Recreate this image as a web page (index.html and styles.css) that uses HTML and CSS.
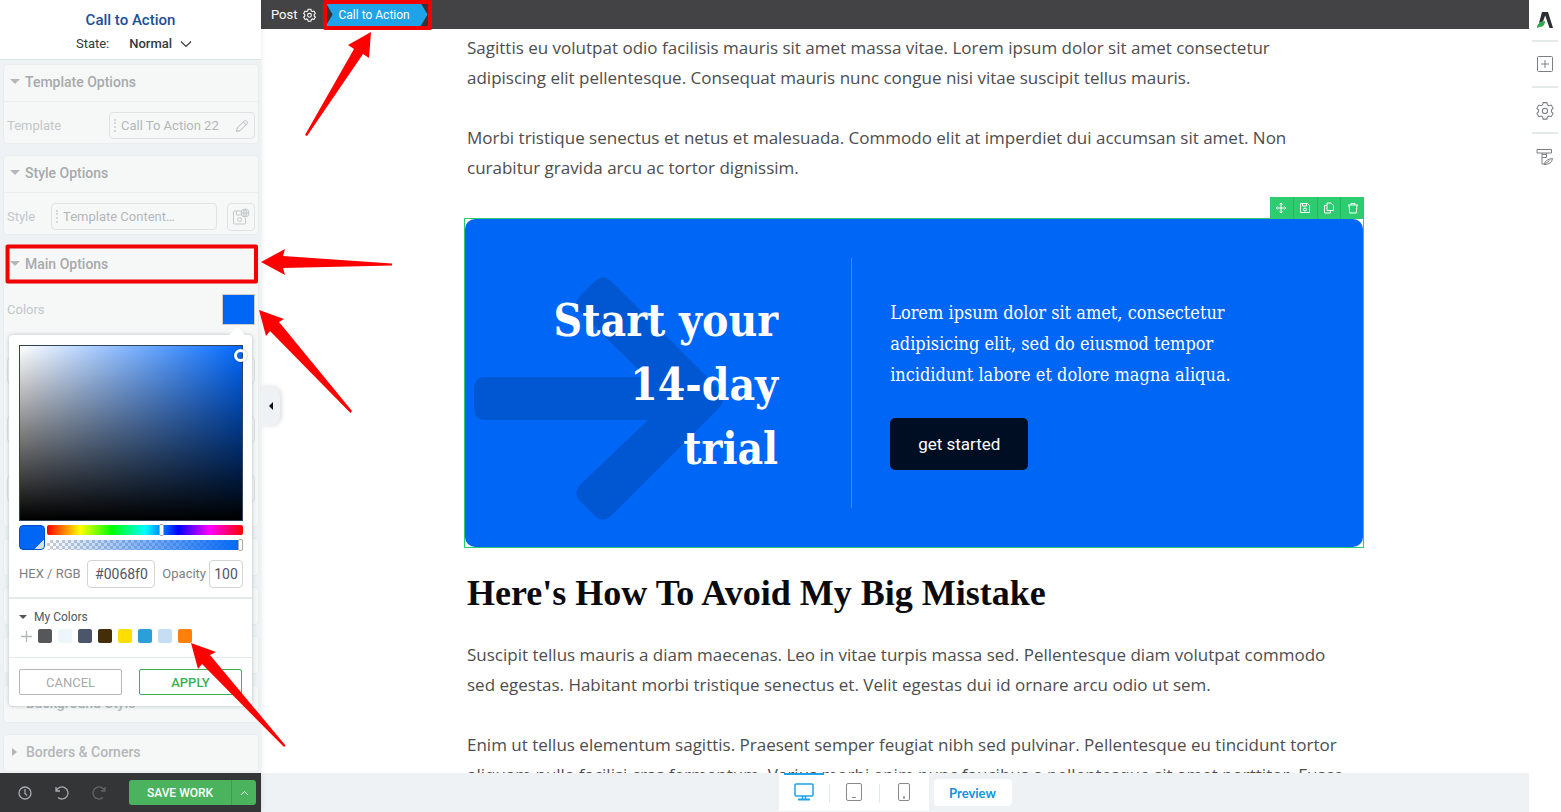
FILE: index.html
```html
<!DOCTYPE html>
<html lang="en">
<head>
    <meta charset="UTF-8">
    <meta name="viewport" content="width=device-width, initial-scale=1.0">
    <title>Call to Action</title>
    <link rel="stylesheet" href="styles.css">
</head>
<body>
<div class="editor">
    <aside class="sidebar">
        <header class="sidebar-header">
            <h1>Call to Action</h1>
            <div class="state">
                <span>State:</span>
                <button type="button" class="state-button">Normal
                    <svg width="12" height="8" viewBox="0 0 12 8"><path d="M1 1.5l5 5 5-5" fill="none" stroke="currentColor" stroke-width="1.2"/></svg>
                </button>
            </div>
        </header>

        <div class="panels">
            <section class="panel">
                <h2 class="panel-title open">Template Options</h2>
                <div class="panel-row">
                    <span class="row-label">Template</span>
                    <button type="button" class="picker picker-template">Call To Action 22
                        <svg width="14" height="14" viewBox="0 0 14 14"><path d="M1.5 12.5l.8-3.5 7.2-7.2q.8-.8 1.6 0l1.1 1.1q.8.8 0 1.6L5 11.7zM8.3 3l2.7 2.7" fill="none" stroke="currentColor"/></svg>
                    </button>
                </div>
            </section>

            <section class="panel">
                <h2 class="panel-title open">Style Options</h2>
                <div class="panel-row">
                    <span class="row-label">Style</span>
                    <button type="button" class="picker picker-style">Template Content…</button>
                    <button type="button" class="save-style" aria-label="Save style">
                        <svg width="18" height="18" viewBox="0 0 18 18" fill="none" stroke="currentColor"><path d="M9 3H2.5Q1.5 3 1.5 4v11q0 1 1 1h10q1 0 1-1v-5M4.500 3v4H9"/><circle cx="7.5" cy="11.5" r="2"/><circle cx="13" cy="5" r="4"/><path d="M9 5h8M13 1v8M13 1q-4 4 0 8M13 1q4 4 0 8"/></svg>
                    </button>
                </div>
            </section>

            <section class="panel panel-main">
                <h2 class="panel-title open">Main Options</h2>
                <div class="panel-row row-colors">
                    <span class="row-label">Colors</span>
                    <button type="button" class="color-button" aria-label="Pick color"></button>
                </div>
                <div class="control-stack">
                    <span></span><span></span><span></span>
                </div>

                <div class="color-picker">
                    <div class="saturation"><span class="saturation-knob"></span></div>
                    <div class="slider-row">
                        <span class="current-color"></span>
                        <div class="sliders">
                            <input type="range" class="hue" min="0" max="360" value="211" aria-label="Hue">
                            <input type="range" class="alpha" min="0" max="100" value="100" aria-label="Alpha">
                        </div>
                    </div>
                    <div class="value-row">
                        <label for="hex">HEX / RGB</label>
                        <input type="text" id="hex" class="hex" value="#0068f0">
                        <label for="opacity">Opacity</label>
                        <input type="text" id="opacity" class="opacity" value="100">
                    </div>
                    <div class="my-colors">
                        <h3>My Colors</h3>
                        <div class="swatches">
                            <button type="button" class="add" aria-label="Add color"><svg width="11" height="11" viewBox="0 0 11 11"><path d="M5.5 0v11M0 5.5h11" stroke="#b4b7b9" stroke-width="1.3"/></svg></button>
                            <button type="button" class="swatch gray" aria-label="Gray"></button>
                            <button type="button" class="swatch mist" aria-label="Mist"></button>
                            <button type="button" class="swatch slate" aria-label="Slate"></button>
                            <button type="button" class="swatch brown" aria-label="Brown"></button>
                            <button type="button" class="swatch yellow" aria-label="Yellow"></button>
                            <button type="button" class="swatch sky" aria-label="Sky"></button>
                            <button type="button" class="swatch pale" aria-label="Pale blue"></button>
                            <button type="button" class="swatch orange" aria-label="Orange"></button>
                        </div>
                    </div>
                    <div class="picker-actions">
                        <button type="button" class="cancel">CANCEL</button>
                        <button type="button" class="apply">APPLY</button>
                    </div>
                </div>
            </section>

            <section class="panel"><div class="panel-title"></div></section>
            <section class="panel"><div class="panel-title"></div></section>
            <section class="panel"><div class="panel-title"></div></section>
            <section class="panel"><h2 class="panel-title">Background Style</h2></section>
            <section class="panel"><h2 class="panel-title">Borders &amp; Corners</h2></section>
        </div>

        <footer class="sidebar-footer">
            <button type="button" class="icon-button" aria-label="Revisions">
                <svg width="14" height="14" viewBox="0 0 14 14" fill="none" stroke="#a7a9ab" stroke-width="1.3"><circle cx="7" cy="7" r="6"/><path d="M7 3v4.500l2 2"/></svg>
            </button>
            <button type="button" class="icon-button" aria-label="Undo">
                <svg width="14" height="14" viewBox="0 0 14 14" fill="none" stroke="#a7a9ab" stroke-width="1.3"><path d="M1 1v4h4M1.300 5A6 6 0 1 1 3 11.500"/></svg>
            </button>
            <button type="button" class="icon-button" aria-label="Redo">
                <svg width="14" height="14" viewBox="0 0 14 14" fill="none" stroke="#626466" stroke-width="1.3"><path d="M13 1v4H9M12.700 5A6 6 0 1 0 11 11.500"/></svg>
            </button>
            <div class="save-group">
                <button type="button" class="save">SAVE WORK</button>
                <button type="button" class="save-more" aria-label="More save options">
                    <svg width="9" height="6" viewBox="0 0 9 6"><path d="M1 5l3.500-3.500L8 5" fill="none" stroke="#fff"/></svg>
                </button>
            </div>
        </footer>
        <button type="button" class="collapse" aria-label="Collapse sidebar"></button>
    </aside>

    <main class="workspace">
        <nav class="breadcrumbs">
            <a href="#">Post</a>
            <svg width="13" height="14" viewBox="0 0 24 25" fill="none" stroke="#fff" stroke-width="2"><path d="M9.500 2h5l.8 3 2 1.200 3-.9 2.500 4.300-2.200 2.200v2.400l2.200 2.200-2.500 4.300-3-.9-2 1.200-.8 3h-5l-.8-3-2-1.200-3 .9-2.500-4.300 2.200-2.200v-2.400L1.200 9.600l2.500-4.300 3 .9 2-1.200z"/><circle cx="12" cy="13" r="3.500"/></svg>
            <div class="crumb-wrap"><a href="#" class="crumb">Call to Action</a></div>
        </nav>

        <div class="canvas">
            <article class="post">
                <p>Sagittis eu volutpat odio facilisis mauris sit amet massa vitae. Lorem ipsum dolor sit amet consectetur<br>adipiscing elit pellentesque. Consequat mauris nunc congue nisi vitae suscipit tellus mauris.</p>
                <p>Morbi tristique senectus et netus et malesuada. Commodo elit at imperdiet dui accumsan sit amet. Non<br>curabitur gravida arcu ac tortor dignissim.</p>

                <section class="cta">
                    <div class="cta-tools">
                        <button type="button" aria-label="Move"><svg width="12" height="12" viewBox="0 0 12 12"><path d="M6 1v10M1 6h10M4.500 2.500L6 1l1.500 1.500M4.500 9.500L6 11l1.500-1.500M2.500 4.500L1 6l1.500 1.500M9.500 4.500L11 6 9.500 7.500"/></svg></button>
                        <button type="button" aria-label="Save"><svg width="12" height="12" viewBox="0 0 12 12"><path d="M1.500 1.500h7l2 2v7h-9zM3.500 1.500v2.500h4V1.500"/><circle cx="6" cy="7.5" r="1.5"/></svg></button>
                        <button type="button" aria-label="Duplicate"><svg width="12" height="12" viewBox="0 0 12 12"><path d="M4 1h4l2.500 2.500v5H4zM4 3.500H1.500v7.500H7.500V8.500"/></svg></button>
                        <button type="button" aria-label="Delete"><svg width="12" height="12" viewBox="0 0 12 12"><path d="M1 3h10M4 3V1.500h4V3M2 3l.7 8h6.600L10 3"/></svg></button>
                    </div>
                    <div class="cta-box">
                        <svg class="cta-arrow" width="270" height="328" viewBox="0 0 270 328"><path fill="#0057d1" d="M21 158H181L116 94Q107 85 116 76L129 63Q138 54 147 63L254 170Q262 180 254 189L147 296Q138 305 129 296L116 283Q107 274 116 265L183 201H21Q9 201 9 189V170Q9 158 21 158Z"/></svg>
                        <h2>Start your<br>14-day<br>trial</h2>
                        <div class="cta-text">
                            <p>Lorem ipsum dolor sit amet, consectetur<br>adipisicing elit, sed do eiusmod tempor<br>incididunt labore et dolore magna aliqua.</p>
                            <a href="#" class="cta-button">get started</a>
                        </div>
                    </div>
                </section>

                <h2 class="post-heading">Here's How To Avoid My Big Mistake</h2>
                <p>Suscipit tellus mauris a diam maecenas. Leo in vitae turpis massa sed. Pellentesque diam volutpat commodo<br>sed egestas. Habitant morbi tristique senectus et. Velit egestas dui id ornare arcu odio ut sem.</p>
                <p>Enim ut tellus elementum sagittis. Praesent semper feugiat nibh sed pulvinar. Pellentesque eu tincidunt tortor<br>aliquam nulla facilisi cras fermentum. Varius morbi enim nunc faucibus a pellentesque sit amet porttitor. Fusce</p>
            </article>
        </div>

        <footer class="device-bar">
            <div class="devices">
                <button type="button" class="device active" aria-label="Desktop">
                    <svg width="20" height="18" viewBox="0 0 20 18" fill="none" stroke="currentColor" stroke-width="1.5"><rect x="1" y="1" width="18" height="12" rx="1"/><path d="M8.500 13v3M11.500 13v3"/><path d="M4 16.500h12" stroke-width="2"/></svg>
                </button>
                <button type="button" class="device" aria-label="Tablet">
                    <svg width="16" height="18" viewBox="0 0 16 18" fill="none" stroke="currentColor"><rect x=".5" y=".5" width="15" height="17" rx="1.5"/><path d="M6 14.500h4"/></svg>
                </button>
                <button type="button" class="device" aria-label="Mobile">
                    <svg width="12" height="18" viewBox="0 0 12 18" fill="none" stroke="currentColor"><rect x=".5" y=".5" width="11" height="17" rx="1.5"/><path d="M5 14.500h2" stroke-width="2"/></svg>
                </button>
            </div>
            <button type="button" class="preview">Preview</button>
        </footer>
    </main>

    <nav class="rail">
        <a href="#" aria-label="Home">
            <svg width="18" height="18" viewBox="0 0 18 18"><path fill="#2c3033" d="M6 1h6l5 16h-3.500L9.200 4.500 7 10.500 3 12z"/><path fill="#2fa84f" d="M1 16.500q0-5.500 8-6.500 0 6-6 6l-1 1z"/></svg>
        </a>
        <a href="#" aria-label="Add element">
            <svg width="16" height="16" viewBox="0 0 16 16" fill="none" stroke="#7b7f82"><rect x=".5" y=".5" width="15" height="15" rx="1"/><path d="M8 4v8M4 8h8"/></svg>
        </a>
        <a href="#" aria-label="Settings">
            <svg width="18" height="19" viewBox="0 0 24 25" fill="none" stroke="#7b7f82" stroke-width="1.4"><path d="M9.500 2h5l.8 3 2 1.200 3-.9 2.500 4.300-2.200 2.200v2.400l2.200 2.200-2.500 4.300-3-.9-2 1.200-.8 3h-5l-.8-3-2-1.200-3 .9-2.500-4.300 2.200-2.200v-2.400L1.200 9.600l2.500-4.300 3 .9 2-1.200z"/><circle cx="12" cy="13" r="3.5"/></svg>
        </a>
        <a href="#" aria-label="Templates">
            <svg width="18" height="18" viewBox="0 0 18 18" fill="none" stroke="#7b7f82"><path d="M1 1.500h14.500v3.500H1zM6 5v1.500M10.500 5v1.500M6 6.500h4.500v3H6zM6 9.500v6.500h3"/><path d="M8.500 16.500q0-5 8-6-1 6-8 6zl5-4"/></svg>
        </a>
    </nav>

    <!-- tutorial callouts drawn over the editor -->
    <svg class="callouts" width="440" height="760" viewBox="0 0 440 760">
        <g fill="none" stroke="#f20000" stroke-width="4" stroke-linejoin="round">
            <rect x="325" y="2" width="105" height="26"/>
            <rect x="7.5" y="246.5" width="248.5" height="35"/>
        </g>
        <g fill="#ff0000">
            <path d="M371 32L348 45L354 49L305 135L307 136L363 54L369 58Z"/>
            <path d="M261 262L285 249L283 256L392 263.500V265.500L283 268L285 275Z"/>
            <path d="M259 310L284 319L279 322L352 411L350.500 413L270 331L266 336Z"/>
            <path d="M191 643L216 652L210 655L285.500 745.500L284 747L202 664L198 669Z"/>
        </g>
    </svg>
</div>
</body>
</html>
```

FILE: styles.css
```css
* {
    box-sizing: border-box;
}

body {
    margin: 0;
    font-family: Roboto, "Liberation Sans", sans-serif;
    font-size: 13px;
    color: #50565f;
    background-color: #fff;
}

h1, h2, h3, p {
    margin: 0;
}

button {
    padding: 0;
    border: none;
    background: none;
    font: inherit;
    color: inherit;
    cursor: pointer;
}

a {
    color: inherit;
    text-decoration: none;
}

svg {
    display: block;
    flex: none;
}

.editor {
    position: relative;
    display: flex;
    height: 100vh;
    overflow: hidden;
}

/* Sidebar */
.sidebar {
    position: relative;
    z-index: 1;
    display: flex;
    flex-direction: column;
    flex: none;
    width: 261px;
    background-color: #eef2f4;
    box-shadow: 0 0 5px rgba(0, 0, 0, 0.1);
}

.sidebar-header {
    height: 60px;
    padding-top: 10px;
    background-color: #fff;
    border-bottom: 1px solid #dde4e7;
    text-align: center;
}

.sidebar-header h1 {
    font-size: 15px;
    line-height: 20px;
    font-weight: 500;
    color: #1c4f96;
}

.state {
    display: flex;
    justify-content: center;
    gap: 20px;
    padding-top: 4px;
    padding-left: 7px;
    line-height: 20px;
    color: #35383b;
}

.state-button {
    display: flex;
    align-items: center;
    gap: 8px;
    font-weight: 500;
}

.panels {
    display: flex;
    flex-direction: column;
    flex: 1;
    min-height: 0;
    gap: 11px;
    padding: 4px 2px 0 3px;
}

.panel {
    position: relative;
    flex: none;
    background-color: #f6f8f8;
    border: 1px solid #e8edef;
    border-radius: 4px;
}

.panel-title {
    display: flex;
    align-items: center;
    gap: 7px;
    height: 36px;
    padding: 0 0 3px 6px;
    font-size: 14px;
    font-weight: 500;
    color: #b4b7b9;
}

h2.panel-title::before {
    content: "";
    margin: 0 2px;
    border: 4px solid transparent;
    border-left: 5px solid #b4b7b9;
    border-right: none;
}

h2.panel-title.open::before {
    margin: 0;
    border: 5px solid transparent;
    border-top-color: #b4b7b9;
    border-bottom: none;
}

h2.panel-title.open {
    color: #a6aaad;
    gap: 5px;
}

.panel-row {
    display: flex;
    align-items: center;
    height: 42px;
    padding: 6px 3px 0;
    border-top: 1px solid #e8edef;
}

.row-label {
    color: #c2c7ca;
}

.picker {
    position: relative;
    display: flex;
    align-items: center;
    justify-content: space-between;
    height: 27px;
    padding: 0 5px 0 11px;
    border: 1px solid #dfe3e5;
    border-radius: 4px;
    color: #b4b7b9;
}

.picker::before {
    content: "";
    position: absolute;
    left: 4px;
    top: 6px;
    bottom: 6px;
    border-left: 2px dotted #d5d9db;
}

.picker-template {
    width: 146px;
    margin-left: auto;
}

.picker-style {
    width: 166px;
    margin-left: auto;
    margin-right: 10px;
}

.save-style {
    display: flex;
    align-items: center;
    justify-content: center;
    width: 28px;
    height: 28px;
    border: 1px solid #dfe3e5;
    border-radius: 4px;
    color: #c2c7ca;
}

.panel-main {
    height: 281px;
}

.row-colors {
    justify-content: space-between;
    height: 52px;
    padding-top: 0;
}

.color-button {
    width: 33px;
    height: 31px;
    border: 1px solid #d0ccc8;
    background-color: #0066f5;
}

.control-stack {
    display: flex;
    flex-direction: column;
    gap: 32px;
    padding: 22px 3px;
}

.control-stack span {
    height: 27px;
    border: 1px solid #dfe3e5;
    border-radius: 4px;
}

/* Color picker popover */
.color-picker {
    position: absolute;
    z-index: 2;
    top: 88px;
    left: 5px;
    right: 6px;
    background-color: #fff;
    border-radius: 4px;
    box-shadow: 0 0 4px rgba(90, 110, 120, 0.4);
}

.color-picker::before {
    content: "";
    position: absolute;
    top: -8px;
    right: 6px;
    border: 9px solid transparent;
    border-top: none;
    border-bottom-color: #fff;
}

.saturation {
    position: relative;
    top: 10px;
    height: 176px;
    margin: 0 9px 14px 10px;
    border: 1px solid #30435f;
    background: linear-gradient(to top, #000, transparent), linear-gradient(to right, #fff, #0068ff);
}

.saturation-knob {
    position: absolute;
    top: 3px;
    right: -5px;
    width: 13px;
    height: 13px;
    border: 3px solid #fff;
    border-radius: 50%;
    box-shadow: 0 0 2px rgba(0, 0, 0, 0.5);
}

.slider-row {
    display: flex;
    gap: 2px;
    padding: 0 9px 0 10px;
}

.current-color {
    width: 26px;
    height: 25px;
    border: 1px solid #0050c8;
    border-radius: 4px;
    background: linear-gradient(135deg, #0066f5 80%, #dcdfe1 80%);
}

.sliders {
    display: flex;
    flex: 1;
    flex-direction: column;
    gap: 5px;
}

.sliders input {
    appearance: none;
    width: 100%;
    height: 10px;
    margin: 0;
    border-radius: 2px;
}

.sliders input::-webkit-slider-thumb {
    appearance: none;
    width: 5px;
    height: 12px;
    border: 1px solid #aaa;
    border-radius: 2px;
    background-color: #fff;
}

.hue {
    background: linear-gradient(to right, #f00, #ff0 17%, #0f0 33%, #0ff 50%, #00f 67%, #f0f 83%, #f00);
}

.alpha {
    background: linear-gradient(to right, transparent, #0066f5), repeating-conic-gradient(#ccc 0 25%, #fff 0 50%) 0 0 / 6px 6px;
}

.value-row {
    display: flex;
    align-items: center;
    height: 49px;
    padding: 0 9px 0 10px;
    border-bottom: 2px solid #e4e9ea;
    color: #7b7f83;
}

.value-row input {
    height: 28px;
    padding: 0;
    border: 1px solid #d0d4d6;
    border-radius: 4px;
    font: inherit;
    font-size: 14px;
    text-align: center;
    color: #50565f;
}

.value-row .hex {
    width: 68px;
    margin: 0 auto;
}

.value-row .opacity {
    width: 34px;
    margin-left: 3px;
}

.my-colors {
    height: 59px;
    padding: 10px 10px 0;
    border-bottom: 1px solid #e4e9ea;
}

.my-colors h3 {
    display: flex;
    align-items: center;
    gap: 7px;
    font-size: 12px;
    line-height: 16px;
    font-weight: 400;
}

.my-colors h3::before {
    content: "";
    border: 4px solid transparent;
    border-top-color: #50565f;
    border-bottom: none;
}

.swatches {
    display: flex;
    align-items: center;
    gap: 6px;
    padding: 4px 2px;
}

.swatch {
    width: 14px;
    height: 14px;
    border-radius: 2px;
}

.gray { background-color: #55575a; }
.mist { background-color: #edf7fb; }
.slate { background-color: #4c566a; }
.brown { background-color: #452d08; }
.yellow { background-color: #ffdf00; }
.sky { background-color: #2ba0d8; }
.pale { background-color: #c5def4; }
.orange { background-color: #ff8008; }

.picker-actions {
    display: flex;
    gap: 17px;
    padding: 11px 10px;
}

.picker-actions button {
    flex: 1;
    height: 26px;
    border: 1px solid #b4b7b9;
    border-radius: 2px;
    color: #a6aaad;
}

.picker-actions .apply {
    border-color: #3ab054;
    color: #3ab054;
    font-weight: 500;
}

.sidebar-footer {
    position: relative;
    z-index: 1;
    display: flex;
    align-items: center;
    flex: none;
    height: 39px;
    padding: 0 5px 0 18px;
    background-color: #343537;
}

.icon-button {
    margin-right: 23px;
}

.save-group {
    display: flex;
    width: 127px;
    height: 25px;
    margin-left: auto;
    border-radius: 3px;
    background-color: #4bb35e;
    color: #fff;
}

.save {
    flex: 1;
    font-size: 12px;
    font-weight: 500;
}

.save-more {
    display: flex;
    align-items: center;
    justify-content: center;
    width: 25px;
    border-left: 1px solid #3c9c4f;
}

.collapse {
    position: absolute;
    left: 100%;
    top: 386px;
    display: flex;
    align-items: center;
    justify-content: center;
    width: 19px;
    height: 40px;
    border-radius: 0 10px 10px 0;
    background-color: #eef2f4;
    box-shadow: 2px 0 4px rgba(0, 0, 0, 0.12);
}

.collapse::before {
    content: "";
    border: 4px solid transparent;
    border-right-color: #111;
    border-left: none;
}

/* Workspace */
.workspace {
    display: flex;
    flex: 1;
    flex-direction: column;
    min-width: 0;
}

.breadcrumbs {
    display: flex;
    align-items: center;
    flex: none;
    height: 29px;
    padding-left: 10px;
    gap: 5px;
    background-color: #434345;
    color: #fff;
}

.crumb-wrap {
    margin-left: 5px;
    background-color: #343537;
}

.crumb {
    display: block;
    width: 102px;
    padding-left: 13px;
    font-size: 12px;
    line-height: 24px;
    background-color: #1fa3e8;
    clip-path: polygon(0 0, 93% 0, 100% 50%, 93% 100%, 0 100%, 7% 50%);
}

.canvas {
    flex: 1;
    min-height: 0;
    overflow: hidden;
    padding: 4px 0 0 38px;
}

.post {
    max-width: 900px;
    margin: 0 auto;
    font-family: "Open Sans", "Noto Sans", sans-serif;
    font-size: 17px;
    line-height: 30px;
    color: #4d4d4d;
}

.post > p {
    padding-left: 3px;
    margin-bottom: 30px;
    white-space: nowrap;
}

.cta {
    position: relative;
    margin: 35px 0 25px;
    border: 1px solid #2ecc71;
}

.cta-tools {
    position: absolute;
    right: -1px;
    bottom: 100%;
    display: flex;
    width: 94px;
    background-color: #2ecc71;
}

.cta-tools button {
    display: flex;
    flex: 1;
    align-items: center;
    justify-content: center;
    height: 22px;
}

.cta-tools button + button {
    border-left: 1px solid #28b463;
}

.cta-tools svg {
    fill: none;
    stroke: #fff;
}

.cta-box {
    position: relative;
    display: flex;
    padding: 39px 0;
    border-radius: 10px;
    background-color: #0066f5;
    color: #fff;
    font-family: "DejaVu Serif Condensed", "DejaVu Serif", serif;
}

.cta-arrow {
    position: absolute;
    left: 0;
    top: 0;
}

.cta h2 {
    position: relative;
    width: 43%;
    padding: 31px 73px 27px 0;
    font-size: 44px;
    line-height: 64px;
    font-weight: 700;
    text-align: right;
}

.cta-text {
    display: flex;
    flex: 1;
    flex-direction: column;
    align-items: flex-start;
    justify-content: center;
    gap: 28px;
    padding-left: 38px;
    border-left: 1px solid #3d8cf8;
    font-size: 18px;
    line-height: 31px;
    white-space: nowrap;
}

.cta-button {
    padding: 0 28px;
    border-radius: 5px;
    background-color: #000e24;
    font-family: Roboto, sans-serif;
    font-size: 17px;
    line-height: 52px;
}

.post-heading {
    padding-left: 3px;
    margin-bottom: 27px;
    font-family: "Liberation Serif", serif;
    font-size: 36px;
    line-height: 40px;
    font-weight: 700;
    color: #0b0b0f;
}

.device-bar {
    display: flex;
    justify-content: center;
    flex: none;
    height: 39px;
    gap: 5px;
    background-color: #eef2f4;
}

.devices {
    display: flex;
    height: 38px;
    background-color: #fff;
}

.device {
    position: relative;
    display: flex;
    align-items: center;
    justify-content: center;
    width: 50px;
    color: #85898c;
}

.device + .device::before {
    content: "";
    position: absolute;
    left: 0;
    top: 11px;
    height: 19px;
    border-left: 1px solid #e4e9ea;
}

.device.active {
    color: #1fa3e8;
}

.device.active::after {
    content: "";
    position: absolute;
    top: 0;
    left: 5px;
    right: 5px;
    height: 2px;
    background-color: #1fa3e8;
}

.preview {
    align-self: center;
    width: 78px;
    height: 27px;
    border-radius: 4px;
    background-color: #fff;
    font-family: Lato, sans-serif;
    font-weight: 700;
    color: #1193e0;
}

/* Right rail */
.rail {
    flex: none;
    width: 32px;
    padding: 0 3px;
    background-color: #fff;
}

.rail a {
    display: flex;
    align-items: center;
    justify-content: center;
    height: 46px;
    border-bottom: 2px solid #e4e9ea;
}

.rail a:first-child {
    height: 42px;
}

.rail a:last-child {
    border-bottom: none;
}

.callouts {
    position: absolute;
    z-index: 3;
    left: 0;
    top: 0;
    pointer-events: none;
}
```
